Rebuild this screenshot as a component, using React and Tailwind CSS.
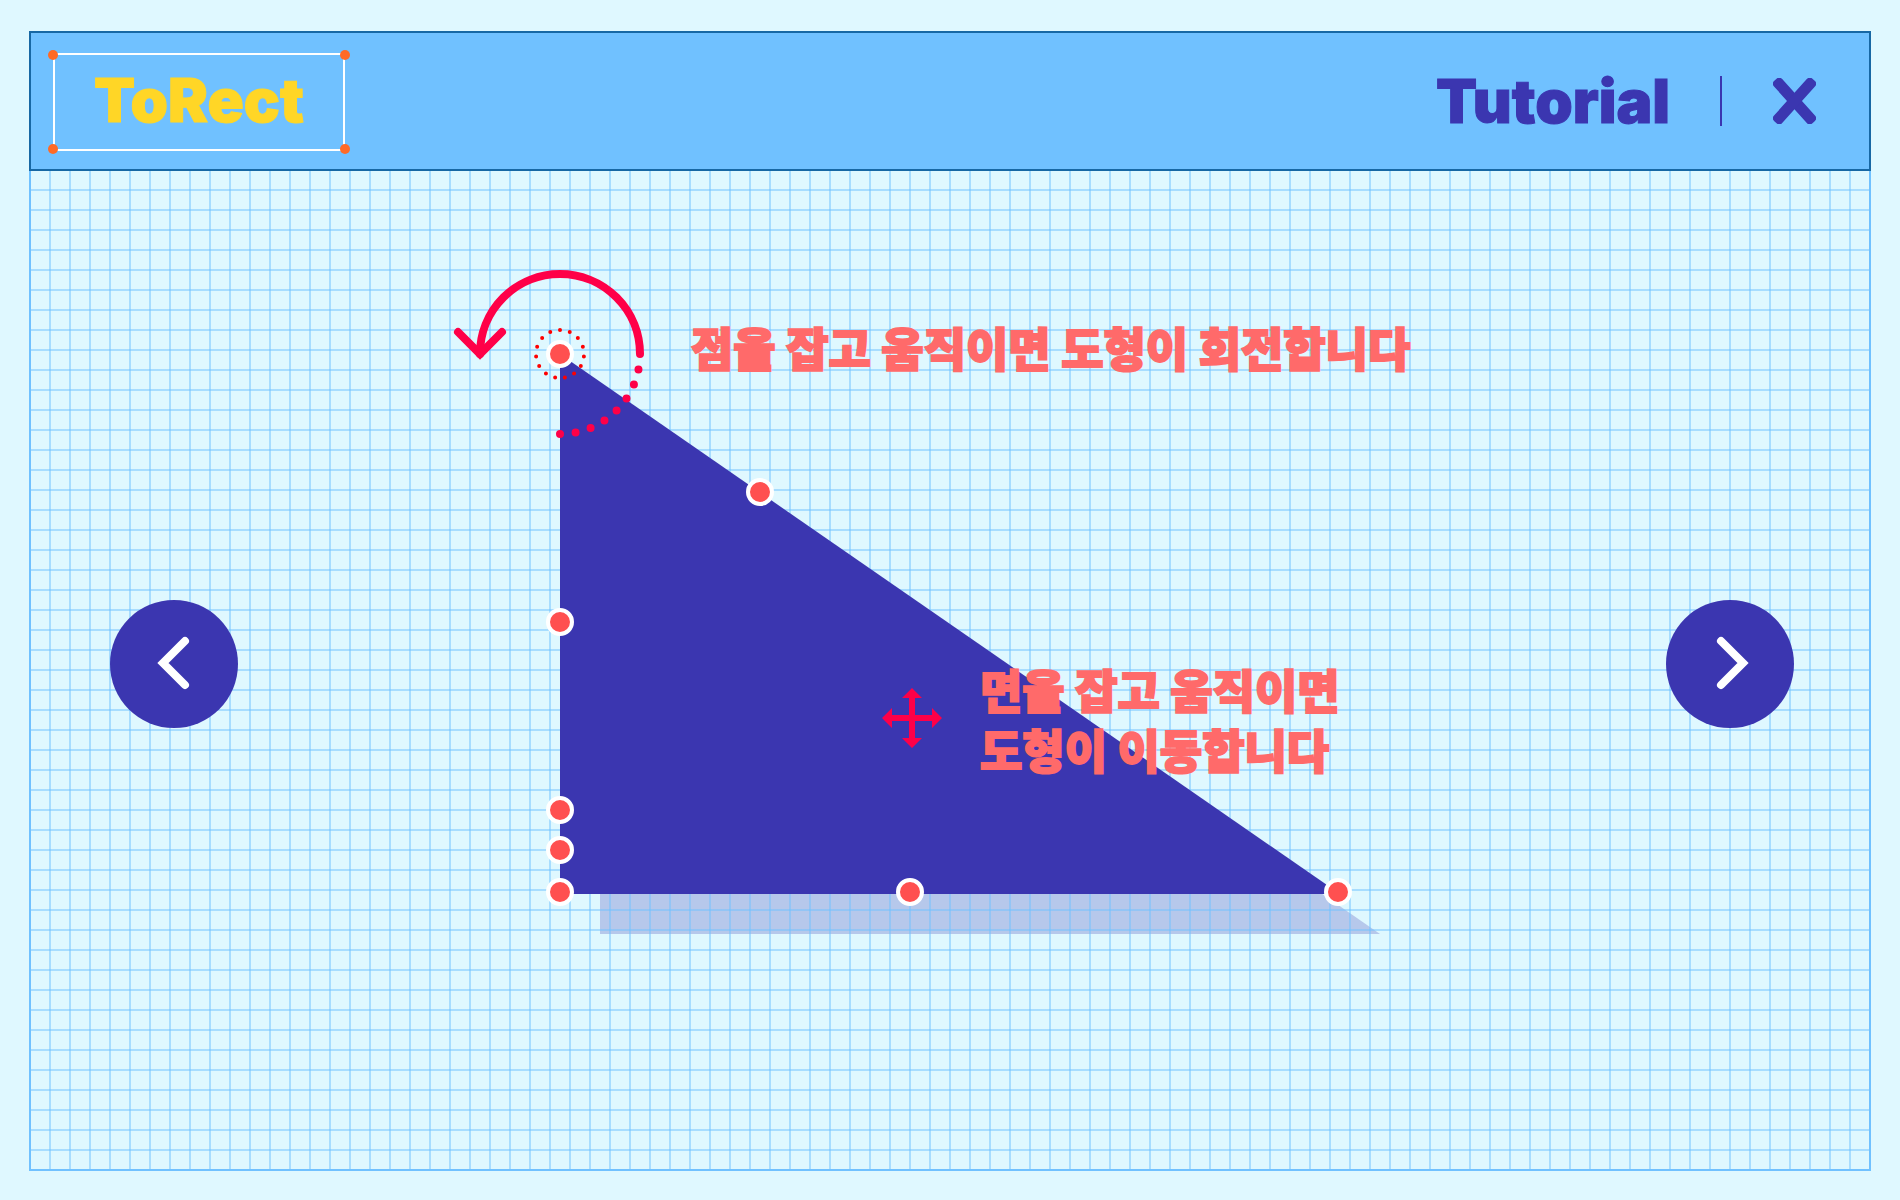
import React from "react";

const HANDLES = [
  [560, 354],
  [760, 492],
  [560, 622],
  [560, 810],
  [560, 850],
  [560, 892],
  [910, 892],
  [1338, 892],
];

const CORNERS = [
  "-left-[7px] -top-[5px]",
  "-right-[7px] -top-[5px]",
  "-left-[7px] -bottom-[5px]",
  "-right-[7px] -bottom-[5px]",
];

function Logo() {
  return (
    <a
      href="#"
      className="relative mt-0.5 flex h-[98px] w-[292px] items-center justify-center border-2 border-white pb-1 font-['Inter',sans-serif] text-[60px] leading-none font-black text-[#ffd626] [-webkit-text-stroke:1px_#ffd626]"
    >
      ToRect
      {CORNERS.map((place) => (
        <span key={place} className={`absolute size-[10px] rounded-full bg-[#ff6a26] ${place}`} />
      ))}
    </a>
  );
}

function Header() {
  return (
    <header className="flex h-[140px] shrink-0 items-center justify-between border-2 border-[#1768a4] bg-[#70c1ff] pr-[53px] pl-[22px]">
      <Logo />
      <div className="flex items-center text-[#3b36b0]">
        <h1 className="font-['Inter',sans-serif] text-[60px] leading-none font-black [-webkit-text-stroke:1px_#3b36b0]">
          Tutorial
        </h1>
        <span className="mr-[51px] ml-[50px] h-[50px] w-0.5 bg-[#3b36b0]" />
        <button type="button" aria-label="Close" className="cursor-pointer">
          <svg width="43" height="46" viewBox="0 0 43 46" fill="currentColor">
            <rect x="-7" y="17.5" width="57" height="11" rx="4" transform="rotate(48 21.5 23)" />
            <rect x="-7" y="17.5" width="57" height="11" rx="4" transform="rotate(-48 21.5 23)" />
          </svg>
        </button>
      </div>
    </header>
  );
}

function NavButton({ label, points }) {
  return (
    <button
      type="button"
      aria-label={label}
      className="relative z-20 size-32 shrink-0 cursor-pointer rounded-full bg-[#3b36b0] text-white"
    >
      <svg viewBox="0 0 128 128" fill="none" stroke="currentColor" strokeWidth="8" strokeLinecap="round">
        <polyline points={points} />
      </svg>
    </button>
  );
}

function Shadow() {
  return (
    <svg viewBox="452 264 1000 800" className="absolute inset-0 z-0 size-full">
      <path d="M600 394V934H1380Z" fill="#3b36b0" fillOpacity="0.25" />
    </svg>
  );
}

function Shape() {
  return (
    <svg viewBox="452 264 1000 800" className="relative z-20 size-full" fill="none">
      <path d="M560 354V894H1340Z" fill="#3b36b0" />
      {HANDLES.map(([x, y]) => (
        <circle key={`${x}-${y}`} cx={x} cy={y} r="12" fill="#ff5050" stroke="#fff" strokeWidth="4" />
      ))}
      <path
        d="M560 330A24 24 0 0 1 560 378A24 24 0 0 1 560 330"
        pathLength="150"
        stroke="#f00"
        strokeWidth="4"
        strokeLinecap="round"
        strokeDasharray="0 10"
      />
      <g stroke="#ff0048" strokeWidth="8" strokeLinecap="round">
        <path d="M640 354A80 80 0 0 0 480 354" />
        <path d="M458 332L480 354L502 332" />
        <path d="M560 434A80 80 0 0 0 640 354" pathLength="80" strokeDasharray="0 10" />
      </g>
      <path
        d="M912 688L922 698H915V715H932V708L942 718L932 728V721H915V738H922L912 748L902 738H909V721H892V728L882 718L892 708V715H909V698H902Z"
        fill="#ff0048"
      />
    </svg>
  );
}

function Hint({ className, children }) {
  return (
    <p
      className={`absolute z-20 font-['Noto_Sans_CJK_KR',sans-serif] text-[46px] leading-[60px] font-black whitespace-nowrap text-[#ff6a6a] [-webkit-text-stroke:2px_#ff6a6a] ${className}`}
    >
      {children}
    </p>
  );
}

export default function App() {
  return (
    <div className="flex min-h-screen flex-col bg-[#dff8ff] px-[29px] pt-[31px] pb-[29px]">
      <Header />
      <main className="relative isolate flex flex-1 items-center justify-between border-x-2 border-b-2 border-[#70c1ff] pr-[75px] pb-3 pl-[79px]">
        <div className="pointer-events-none absolute inset-0 z-10 bg-[linear-gradient(to_right,transparent_18px,#70c1ff80_18px),linear-gradient(to_bottom,transparent_18px,#70c1ff80_18px)] bg-[length:20px_20px]" />
        <NavButton label="Previous" points="75,41 53,63 75,85" />
        <section className="relative h-[800px] w-[1000px] shrink-0">
          <Shadow />
          <Shape />
          <Hint className="top-[52px] left-[239px]">점을 잡고 움직이면 도형이 회전합니다</Hint>
          <Hint className="top-[394px] left-[528px]">
            면을 잡고 움직이면
            <br />
            도형이 이동합니다
          </Hint>
        </section>
        <NavButton label="Next" points="55,41 77,63 55,85" />
      </main>
    </div>
  );
}
